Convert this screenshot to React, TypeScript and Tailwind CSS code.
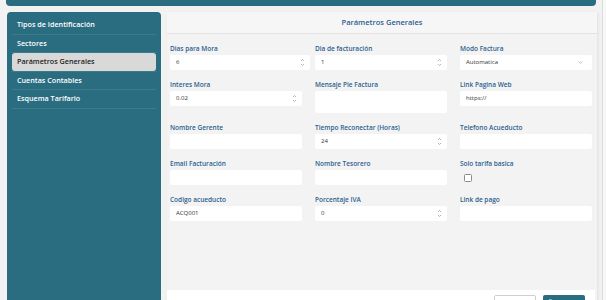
import { ChevronDown, Save } from "lucide-react";

const menu = [
  "Tipos de Identificación",
  "Sectores",
  "Parámetros Generales",
  "Cuentas Contables",
  "Esquema Tarifario",
];

type Field = {
  label: string;
  value?: string;
  kind?: "number" | "select" | "textarea" | "check";
  wide?: boolean;
};

const fields: Field[] = [
  { label: "Dias para Mora", value: "6", kind: "number", wide: true },
  { label: "Dia de facturación", value: "1", kind: "number" },
  { label: "Modo Factura", value: "Automatica", kind: "select" },
  { label: "Interes Mora", value: "0.02", kind: "number" },
  { label: "Mensaje Pie Factura", kind: "textarea" },
  { label: "Link Pagina Web", value: "https://" },
  { label: "Nombre Gerente" },
  { label: "Tiempo Reconectar (Horas)", value: "24", kind: "number" },
  { label: "Telefono Acueducto" },
  { label: "Email Facturación" },
  { label: "Nombre Tesorero" },
  { label: "Solo tarifa basica", kind: "check" },
  { label: "Codigo acueducto", value: "ACQ001" },
  { label: "Porcentaje IVA", value: "0", kind: "number" },
  { label: "Link de pago" },
];

function Spinner() {
  return (
    <svg width="5" height="9" viewBox="0 0 5 9" className="absolute right-[5px] top-[3px]">
      <path d="M1 3 L2.5 1.5 L4 3" fill="none" stroke="#9a9a9a" strokeWidth="0.7" />
      <path d="M1 6 L2.5 7.5 L4 6" fill="none" stroke="#9a9a9a" strokeWidth="0.7" />
    </svg>
  );
}

function FieldBox({ f }: { f: Field }) {
  if (f.kind === "check") {
    return (
      <div className="h-[15px] pl-[4px] pt-[4px]">
        <div className="w-[8px] h-[8px] bg-white border border-[#8a8a8a] rounded-[1.5px]" />
      </div>
    );
  }
  if (f.kind === "textarea") {
    return <div className="h-[22px] bg-white rounded-[2px]" />;
  }
  return (
    <div
      className={`relative h-[15px] bg-white rounded-[2px] flex items-center pl-[6px] text-[6px] text-[#333] ${
        f.wide ? "w-[140px]" : "w-full"
      }`}
    >
      {f.value}
      {f.kind === "number" && <Spinner />}
      {f.kind === "select" && (
        <ChevronDown size={7} strokeWidth={1.5} className="absolute right-[8px] top-[4px] text-[#777]" />
      )}
    </div>
  );
}

export default function App() {
  return (
    <div className="relative w-[606px] h-[300px] overflow-hidden bg-[#f2f2f2] font-['Open_Sans',sans-serif]">
      <div className="ml-[6px] w-[590px] h-[6px] bg-[#2a6d80] rounded-b-[4px]" />

      <div className="flex gap-[6px] pl-[7px] mt-[6px]">
        {/* menu lateral */}
        <div className="w-[154px] h-[300px] bg-[#2a6d80] rounded-t-[4px] px-[5px] pt-[4px] shrink-0">
          {menu.map((m) => (
            <div key={m} className="border-b border-[#3a7b8c]">
              <div
                className={`h-[17.5px] flex items-center pl-[5px] text-[7.2px] font-semibold ${
                  m === "Parámetros Generales"
                    ? "bg-[#d9d9d9] text-[#1e1e1e] rounded-[3px]"
                    : "text-white"
                }`}
              >
                {m}
              </div>
            </div>
          ))}
        </div>

        {/* panel principal */}
        <div className="w-[430px] h-[300px] bg-[#f3f3f3] shadow-[1px_1px_3px_rgba(0,0,0,0.08)] flex flex-col shrink-0">
          <div className="h-[22px] bg-[#f6f6f6] border-b border-[#e3e3e3] flex items-center justify-center text-[7.5px] font-semibold text-[#2e5e8c]">
            Parámetros Generales
          </div>
          <div className="grid grid-cols-3 gap-x-[13px] gap-y-[10px] items-start pl-[3px] pr-[5px] pt-[10px]">
            {fields.map((f) => (
              <div key={f.label}>
                <div className="h-[10px] leading-[10px] mb-[1px] text-[6.5px] font-semibold text-[#2d5f8e] whitespace-nowrap">
                  {f.label}
                </div>
                <FieldBox f={f} />
              </div>
            ))}
          </div>
          <div className="mt-auto mr-[2px] h-[22px] bg-white flex justify-end gap-[7px] pr-[10px] pt-[5px]">
            <div className="w-[42px] h-[14px] border border-[#cfcfcf] rounded-[2px] bg-white" />
            <div className="w-[42px] h-[14px] bg-[#2a6d80] rounded-[2px] flex items-center pl-[5px] gap-[3px] text-white text-[6px]">
              <Save size={6} />
              Guardar
            </div>
          </div>
        </div>
      </div>

      <div className="absolute top-0 bottom-0 right-[3px] w-px bg-[#dcdcdc]" />
      <div className="absolute top-0 bottom-0 right-0 w-[3px] bg-[#f7f7f7]" />
    </div>
  );
}
